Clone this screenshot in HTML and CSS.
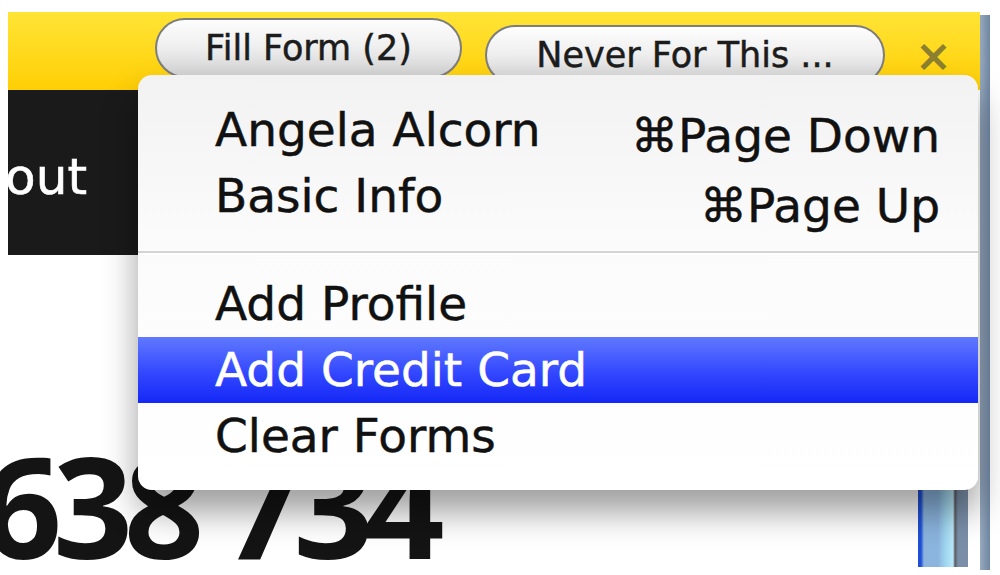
FILE: index.html
```html
<!DOCTYPE html>
<html lang="en">
<head>
    <meta charset="UTF-8">
    <title>Fill Form</title>
    <link rel="stylesheet" href="styles.css">
</head>
<body>
    <div class="page">
        <div class="toolbar">
            <button class="pill fill-btn">Fill Form (2)</button>
            <button class="pill never-btn">Never For This ...</button>
            <span class="close">&times;</span>
        </div>
        <div class="nav-row">
            <div class="nav-block"><span class="nav-link">Logout</span></div>
        </div>
        <div class="number-row">
            <div class="phone">638 734</div>
            <div class="side-tab"></div>
        </div>

        <div class="menu">
            <div class="menu-item"><span>Angela Alcorn</span><span class="shortcut down">&#8984;Page Down</span></div>
            <div class="menu-item"><span>Basic Info</span><span class="shortcut up">&#8984;Page Up</span></div>
            <div class="separator"></div>
            <div class="menu-item">Add Profile</div>
            <div class="menu-item selected">Add Credit Card</div>
            <div class="menu-item">Clear Forms</div>
        </div>
    </div>
    <div class="scrollbar"></div>
</body>
</html>
```

FILE: styles.css
```css
body {
    margin: 0;
    width: 1000px;
    height: 575px;
    overflow: hidden;
    background: #fff;
    font-family: "DejaVu Sans", sans-serif;
    display: flex;
}
.page {
    position: relative;
    width: 980px;
    padding-left: 8px;
    box-sizing: border-box;
}
.toolbar {
    margin-top: 12px;
    height: 78px;
    background: linear-gradient(#ffe436, #ffcf05);
    display: flex;
    align-items: flex-start;
    padding-left: 147px;
}
.pill {
    height: 60px;
    border: 2px solid #7d7d7d;
    border-radius: 30px;
    background: linear-gradient(#fdfdfd, #f0f0f0 45%, #d2d2d2);
    font-family: "DejaVu Sans", sans-serif;
    font-size: 35px;
    color: #1c1c1c;
    -webkit-text-stroke: 0.5px #1c1c1c;
    padding: 0;
}
.fill-btn {
    width: 307px;
    margin-top: 6px;
}
.never-btn {
    width: 400px;
    margin-top: 13px;
    margin-left: 23px;
}
.close {
    margin-left: 30px;
    margin-top: 22px;
    font-size: 44px;
    font-weight: bold;
    color: #8c8030;
    line-height: 44px;
}
.nav-row {
    display: flex;
}
.nav-block {
    width: 135px;
    height: 165px;
    background: #1a1a1a;
    border-right: 4px solid #555;
    display: flex;
    justify-content: flex-end;
    align-items: center;
    overflow: hidden;
    padding-right: 52px;
    box-sizing: border-box;
}
.nav-link {
    color: #fff;
    font-size: 50px;
    -webkit-text-stroke: 0.6px #fff;
    white-space: nowrap;
    padding-top: 8px;
}
.number-row {
    display: flex;
    justify-content: space-between;
    align-items: flex-start;
    margin-top: 180px;
}
.phone {
    margin-left: -26px;
    font-family: "Open Sans", sans-serif;
    font-weight: 700;
    font-size: 140px;
    line-height: 140px;
    letter-spacing: -9px;
    color: #141414;
}
.side-tab {
    width: 50px;
    height: 122px;
    margin-top: 10px;
    margin-right: 12px;
    background: linear-gradient(90deg, #1e4fd6 0, #1e4fd6 6%, #8bb4de 12%, #8bb4de 40%, #9fd6f0 55%, #b9e8f8 70%, #5b5a60 74%, #7a8ea8 80%);
}
.scrollbar {
    width: 10px;
    margin-top: 15px;
    height: 555px;
    background: linear-gradient(90deg, #97a9bd, #6f86a2);
}
.menu {
    position: absolute;
    left: 138px;
    top: 75px;
    width: 840px;
    height: 415px;
    box-sizing: border-box;
    padding: 22px 38px 0 0;
    border-radius: 14px;
    background: linear-gradient(#f2f2f2, #fbfbfb 40%, #fff);
    box-shadow: 0 22px 34px rgba(0, 0, 0, 0.38);
    font-size: 47px;
    color: #111;
    -webkit-text-stroke: 0.5px #111;
}
.menu-item {
    display: flex;
    justify-content: space-between;
    height: 66px;
    line-height: 66px;
    padding-left: 77px;
}
.shortcut.down {
    padding-top: 6px;
}
.shortcut.up {
    padding-top: 10px;
}
.separator {
    height: 2px;
    background: #d4d4d4;
    border-bottom: 2px solid #fff;
    margin: 22px 0 16px;
    margin-right: -38px;
}
.menu-item.selected {
    margin-right: -38px;
    padding-right: 38px;
    color: #fff;
    -webkit-text-stroke: 0.5px #fff;
    background: linear-gradient(#6079ff, #3347ff 55%, #1428f6);
}
```
